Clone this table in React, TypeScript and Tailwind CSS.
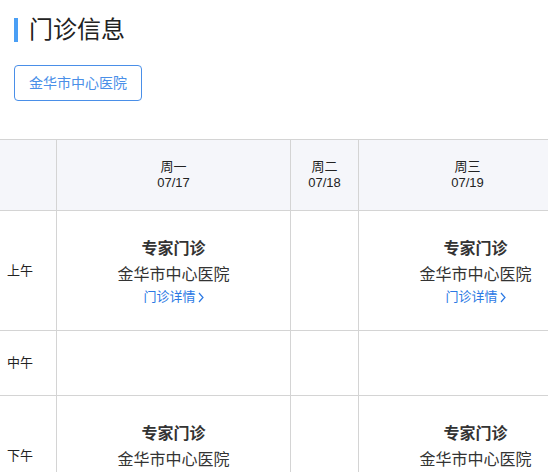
import React from "react";

const font = { fontFamily: '"Liberation Sans", "Noto Sans CJK SC", sans-serif' };

function Chevron() {
  return (
    <svg width="6" height="11" viewBox="0 0 6 11" className="ml-[2px] inline-block">
      <polyline points="1,1 5,5.5 1,10" fill="none" stroke="#2a78e4" strokeWidth="1.2" />
    </svg>
  );
}

function Clinic() {
  return (
    <div className="flex flex-col items-center pt-[3px]">
      <div className="text-[16px] leading-[24px] font-bold text-[#333]">专家门诊</div>
      <div className="text-[16px] leading-[26px] text-[#333] mt-[1px]">金华市中心医院</div>
      <div className="text-[13px] leading-[20px] text-[#2a78e4] flex items-center mt-[-1px]">
        门诊详情
        <Chevron />
      </div>
    </div>
  );
}

export default function App() {
  const cell = "border-r border-b border-[#d4d4d4] flex items-center justify-center";
  const label = "border-r border-b border-[#d4d4d4] flex items-center pl-[7px] text-[13px] text-[#222]";
  return (
    <div className="w-[548px] h-[472px] overflow-hidden bg-white" style={font}>
      <div className="flex items-center pl-[14px] pt-[17px]">
        <div className="w-[4px] h-[24px] bg-[#4a9ff5]" />
        <div className="ml-[11px] text-[24px] leading-[24px] text-[#222] mt-[1px]">门诊信息</div>
      </div>
      <div className="pl-[14px] mt-[23px]">
        <div className="w-[128px] h-[36px] border border-[#4a8fe8] rounded-[4px] flex items-center justify-center text-[14px] text-[#4a8fe8]">
          金华市中心医院
        </div>
      </div>
      <div className="mt-[38px] w-[640px] border-t border-[#d4d4d4] grid grid-cols-[57px_234px_68px_240px] grid-rows-[71px_120px_65px_120px]">
        <div className={"bg-[#f5f6fa] " + cell} />
        <div className={"bg-[#f5f6fa] flex-col text-[13px] leading-[16px] text-[#222] " + cell}>
          <div>周一</div>
          <div>07/17</div>
        </div>
        <div className={"bg-[#f5f6fa] flex-col text-[13px] leading-[16px] text-[#222] " + cell}>
          <div>周二</div>
          <div>07/18</div>
        </div>
        <div className={"bg-[#f5f6fa] flex-col text-[13px] leading-[16px] text-[#222] pr-[22px] " + cell}>
          <div>周三</div>
          <div>07/19</div>
        </div>

        <div className={label}>上午</div>
        <div className={cell}><Clinic /></div>
        <div className={cell} />
        <div className={"pr-[6px] " + cell}><Clinic /></div>

        <div className={label}>中午</div>
        <div className={cell} />
        <div className={cell} />
        <div className={cell} />

        <div className={label}>下午</div>
        <div className={cell}><Clinic /></div>
        <div className={cell} />
        <div className={"pr-[6px] " + cell}><Clinic /></div>
      </div>
    </div>
  );
}
